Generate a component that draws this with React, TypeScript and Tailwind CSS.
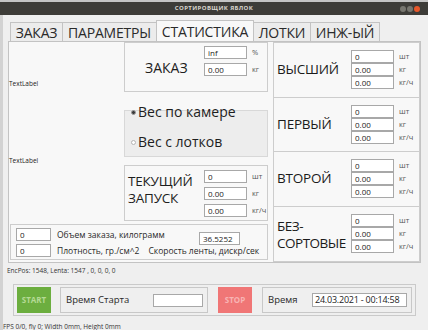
import React from "react"

function Field({ value, className = "" }: { value: string; className?: string }) {
  return (
    <div
      className={`h-[13px] bg-white border border-[#a8a8a8] text-[8px] leading-[11px] pl-[3px] text-[#222] whitespace-nowrap ${className}`}
    >
      {value}
    </div>
  )
}

function Unit({ children }: { children: React.ReactNode }) {
  return <span className="ml-[5px] text-[7.5px] leading-[13px] text-[#555]">{children}</span>
}

const gradeRows: [string, string][] = [
  ["0", "шт"],
  ["0.00", "кг"],
  ["0.00", "кг/ч"],
]

function GradeBox({ lines, tight = false }: { lines: string[]; tight?: boolean }) {
  return (
    <div className="flex items-center pl-[3px]">
      <div
        className={`w-[74px] text-[13.5px] leading-[17px] text-[#1b1b1b] flex flex-col ${
          tight ? "tracking-[-0.5px] pt-[2px]" : "tracking-[-0.2px]"
        }`}
      >
        {lines.map((l) => (
          <span key={l}>{l}</span>
        ))}
      </div>
      <div className="flex flex-col">
        {gradeRows.map(([v, u], i) => (
          <div key={i} className="flex items-center h-[13px]">
            <Field value={v} className="w-[43px]" />
            <Unit>{u}</Unit>
          </div>
        ))}
      </div>
    </div>
  )
}

function Radio({ checked, label }: { checked: boolean; label: string }) {
  return (
    <div className="flex items-center h-[16px] pl-[6px]">
      <span
        className={`w-[5px] h-[5px] rounded-full border ${
          checked ? "border-[#9a9a9a] bg-[#3a3a3a]" : "border-[#b5b5b5] bg-white"
        }`}
      />
      <span className="ml-[2px] text-[14px] leading-[16px] text-[#1e1e1e]">{label}</span>
    </div>
  )
}

export default function App() {
  const tabs = [
    { name: "ЗАКАЗ", w: "w-[53px]" },
    { name: "ПАРАМЕТРЫ", w: "w-[95px]" },
    { name: "СТАТИСТИКА", w: "w-[98px]", active: true },
    { name: "ЛОТКИ", w: "w-[58px]" },
    { name: "ИНЖ-ЫЙ", w: "w-[70px]" },
  ]

  return (
    <div className="w-[428px] h-[330px] overflow-hidden bg-[#efefef] font-['Open_Sans','Noto_Sans',sans-serif] text-[#1e1e1e] flex flex-col">
      {/* Заголовок окна */}
      <div className="h-[15px] shrink-0 bg-[#3d3c38] border-t-2 border-[#c4c4c4] grid grid-cols-[1fr_auto_1fr] items-center">
        <div />
        <div className="text-[6px] font-bold tracking-[0.4px] text-[#d9d6cf]">СОРТИРОВЩИК ЯБЛОК</div>
        <div className="flex justify-end gap-[1px] pr-[8px]">
          <span className="w-[6px] h-[6px] rounded-full bg-[#77766f]" />
          <span className="w-[6px] h-[6px] rounded-full bg-[#77766f]" />
          <span className="w-[6px] h-[6px] rounded-full bg-[#e8582b]" />
        </div>
      </div>

      <div className="flex flex-1">
        <div className="w-[3px] bg-[#d2d2d2]" />
        <div className="flex-1 flex flex-col">
          {/* Вкладки */}
          <div className="flex items-end h-[26px] pl-[7px]">
            {tabs.map((t) => (
              <div
                key={t.name}
                className={`${t.w} flex items-center justify-center border border-b-0 border-[#c3c3c3] -ml-px first:ml-0 text-[14px] leading-[17px] tracking-[-0.2px] text-[#2a2a2a] ${
                  t.active ? "h-[21px] bg-[#f8f8f8]" : "h-[19px] bg-[#ececec]"
                }`}
              >
                {t.name}
              </div>
            ))}
          </div>

          {/* Панель вкладки */}
          <div className="ml-[5px] w-[413px] h-[222px] border border-[#c3c3c3] bg-[#f8f8f8] flex">
            <div className="w-[261px] flex flex-col">
              <div className="flex h-[180px]">
                <div className="w-[115px] flex flex-col pt-[37px] text-[6.5px] leading-[9px] text-[#222]">
                  <span>TextLabel</span>
                  <span className="mt-[68px]">TextLabel</span>
                </div>

                <div className="w-[144px] flex flex-col">
                  {/* ЗАКАЗ */}
                  <div className="h-[50px] border border-[#cdcdcd] flex items-start pt-[3px]">
                    <div className="w-[79px] pl-[20px] text-[14px] leading-[17px] mt-[13px]">ЗАКАЗ</div>
                    <div className="flex flex-col gap-[4px]">
                      <div className="flex items-center">
                        <Field value="inf" className="w-[43px]" />
                        <Unit>%</Unit>
                      </div>
                      <div className="flex items-center">
                        <Field value="0.00" className="w-[43px]" />
                        <Unit>кг</Unit>
                      </div>
                    </div>
                  </div>

                  {/* Выбор веса */}
                  <div className="mt-[18px] h-[47px] border border-[#d8d8d8] bg-[#ededed] flex flex-col">
                    <div className="-mt-[7px]">
                      <Radio checked label="Вес по камере" />
                    </div>
                    <div className="mt-[14px]">
                      <Radio checked={false} label="Вес с лотков" />
                    </div>
                  </div>

                  {/* ТЕКУЩИЙ ЗАПУСК */}
                  <div className="mt-[8px] h-[56px] border border-[#cdcdcd] flex items-start pt-[4px]">
                    <div className="w-[79px] pl-[3px] pt-[3px] text-[13.5px] leading-[17px] tracking-[-0.2px] flex flex-col">
                      <span>ТЕКУЩИЙ</span>
                      <span>ЗАПУСК</span>
                    </div>
                    <div className="flex flex-col gap-[4px]">
                      {gradeRows.map(([v, u], i) => (
                        <div key={i} className="flex items-center">
                          <Field value={v} className="w-[43px]" />
                          <Unit>{u}</Unit>
                        </div>
                      ))}
                    </div>
                  </div>
                </div>
              </div>

              {/* Объем и плотность */}
              <div className="ml-[1px] mt-[2px] w-[258px] h-[36px] border border-[#cdcdcd] flex flex-col pt-[3px] pl-[5px] text-[8.5px] leading-[13px] text-[#2a2a2a]">
                <div className="flex items-start h-[13px]">
                  <Field value="0" className="w-[35px]" />
                  <span className="ml-[6px]">Объем заказа, килограмм</span>
                  <Field value="36.5252" className="w-[41px] ml-auto mr-[27px] mt-[4px] text-[8.5px]" />
                </div>
                <div className="flex items-center h-[13px] mt-[3px]">
                  <Field value="0" className="w-[35px]" />
                  <span className="ml-[6px]">Плотность, гр./см^2</span>
                  <span className="ml-[9px]">Скорость ленты, дискр/сек</span>
                </div>
              </div>
            </div>

            {/* Сорта */}
            <div className="ml-[3px] w-[147px] grid grid-rows-4 border border-[#cdcdcd] divide-y divide-[#cdcdcd]">
              <GradeBox lines={["ВЫСШИЙ"]} />
              <GradeBox lines={["ПЕРВЫЙ"]} />
              <GradeBox lines={["ВТОРОЙ"]} />
              <GradeBox lines={["БЕЗ-", "СОРТОВЫЕ"]} tight />
            </div>
          </div>

          <div className="mt-[3px] pl-[4px] text-[6.5px] leading-[9px] text-[#333]">
            EncPos: 1548, Lenta: 1547 , 0, 0, 0, 0
          </div>

          {/* Нижняя панель */}
          <div className="mt-[9px] ml-[10px] w-[403px] h-[32px] border border-[#cacaca] flex items-center pl-[3px]">
            <div className="w-[34px] h-[26px] bg-[#6cae3f] flex items-center justify-center text-[8px] font-bold text-[#b4da94]">
              START
            </div>
            <div className="ml-[9px] w-[148px] h-[26px] border border-[#c8c8c8] flex items-center pl-[5px] pr-[4px]">
              <span className="text-[9.5px] text-[#2a2a2a]">Время Старта</span>
              <div className="ml-auto w-[50px] h-[13px] bg-white border border-[#a8a8a8]" />
            </div>
            <div className="ml-[10px] w-[34px] h-[26px] bg-[#f07676] flex items-center justify-center text-[8px] font-bold text-[#f8b4b4]">
              STOP
            </div>
            <div className="ml-[10px] w-[150px] h-[26px] border border-[#c8c8c8] flex items-center pl-[5px] pr-[4px]">
              <span className="text-[9.5px] text-[#2a2a2a]">Время</span>
              <div className="ml-auto w-[95px] h-[14px] bg-white border border-[#a8a8a8] text-[9px] leading-[12px] pl-[2px] tracking-tight text-[#222] whitespace-nowrap">
                24.03.2021 - 00:14:58
              </div>
            </div>
          </div>

          <div className="mt-[6px] text-[6.5px] leading-[9px] text-[#333]">
            FPS 0/0, fly 0; Width 0mm, Height 0mm
          </div>
        </div>
      </div>
    </div>
  )
}
